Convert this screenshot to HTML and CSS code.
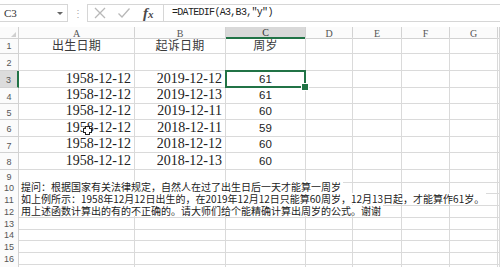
FILE: index.html
```html
<!DOCTYPE html>
<html lang="zh-CN">
<head>
    <meta charset="UTF-8">
    <meta name="viewport" content="width=device-width, initial-scale=1.0">
    <title>周岁计算</title>
    <link rel="stylesheet" href="styles.css">
</head>
<body>
    <!-- Formula bar -->
    <div class="formula-bar">
        <div class="name-box">
            <span>C3</span>
            <span class="arrow"></span>
        </div>
        <div class="grip">⋮</div>
        <div class="fx-buttons">
            <svg class="icon" width="14" height="12" viewBox="0 0 14 12">
                <path d="M2 1 L12 11 M12 1 L2 11" stroke="#b8b8b8" stroke-width="1.3" fill="none"/>
            </svg>
            <svg class="icon" width="14" height="12" viewBox="0 0 14 12">
                <path d="M1.5 6.5 L5 10 L12.5 1.5" stroke="#b8b8b8" stroke-width="1.3" fill="none"/>
            </svg>
            <span class="fx">f<span class="x">x</span></span>
        </div>
        <div class="formula">=DATEDIF(A3,B3,"y")</div>
    </div>

    <!-- Sheet -->
    <div class="sheet">
        <div class="row head">
            <div class="corner"></div>
            <div class="ch">A</div><div class="ch">B</div><div class="ch active">C</div><div class="ch">D</div>
            <div class="ch">E</div><div class="ch">F</div><div class="ch">G</div><div class="ch"></div>
        </div>

        <div class="row h17">
            <div class="rh">1</div>
            <div class="c title">出生日期</div><div class="c title">起诉日期</div><div class="c title">周岁</div>
            <div class="c"></div><div class="c"></div><div class="c"></div><div class="c"></div><div class="c"></div>
        </div>
        <div class="row h17">
            <div class="rh">2</div>
            <div class="c"></div><div class="c"></div><div class="c"></div>
            <div class="c"></div><div class="c"></div><div class="c"></div><div class="c"></div><div class="c"></div>
        </div>
        <div class="row h17">
            <div class="rh active">3</div>
            <div class="c date">1958-12-12</div><div class="c date">2019-12-12</div><div class="c num sel">61</div>
            <div class="c"></div><div class="c"></div><div class="c"></div><div class="c"></div><div class="c"></div>
        </div>
        <div class="row h16">
            <div class="rh">4</div>
            <div class="c date">1958-12-12</div><div class="c date">2019-12-13</div><div class="c num">61</div>
            <div class="c"></div><div class="c"></div><div class="c"></div><div class="c"></div><div class="c"></div>
        </div>
        <div class="row h16">
            <div class="rh">5</div>
            <div class="c date">1958-12-12</div><div class="c date">2019-12-11</div><div class="c num">60</div>
            <div class="c"></div><div class="c"></div><div class="c"></div><div class="c"></div><div class="c"></div>
        </div>
        <div class="row h17">
            <div class="rh">6</div>
            <div class="c date cursor-cell">1958-12-12<span class="cursor"></span></div><div class="c date">2018-12-11</div><div class="c num">59</div>
            <div class="c"></div><div class="c"></div><div class="c"></div><div class="c"></div><div class="c"></div>
        </div>
        <div class="row h16">
            <div class="rh">7</div>
            <div class="c date">1958-12-12</div><div class="c date">2018-12-12</div><div class="c num">60</div>
            <div class="c"></div><div class="c"></div><div class="c"></div><div class="c"></div><div class="c"></div>
        </div>
        <div class="row h17">
            <div class="rh">8</div>
            <div class="c date">1958-12-12</div><div class="c date">2018-12-13</div><div class="c num">60</div>
            <div class="c"></div><div class="c"></div><div class="c"></div><div class="c"></div><div class="c"></div>
        </div>
        <div class="row h11">
            <div class="rh">9</div>
            <div class="c"></div><div class="c"></div><div class="c"></div>
            <div class="c"></div><div class="c"></div><div class="c"></div><div class="c"></div><div class="c"></div>
        </div>

        <!-- Question text overflows across the empty cells -->
        <div class="row h12">
            <div class="rh">10</div>
            <div class="c note"><span>提问：根据国家有关法律规定，自然人在过了出生日后一天才能算一周岁</span></div><div class="c"></div><div class="c"></div>
            <div class="c"></div><div class="c"></div><div class="c"></div><div class="c"></div><div class="c"></div>
        </div>
        <div class="row h12">
            <div class="rh">11</div>
            <div class="c note"><span>如上例所示：1958年12月12日出生的，在2019年12月12日只能算60周岁，12月13日起，才能算作61岁。</span></div><div class="c"></div><div class="c"></div>
            <div class="c"></div><div class="c"></div><div class="c"></div><div class="c"></div><div class="c"></div>
        </div>
        <div class="row h12">
            <div class="rh">12</div>
            <div class="c note"><span>用上述函数计算出的有的不正确的。请大师们给个能精确计算出周岁的公式。谢谢</span></div><div class="c"></div><div class="c"></div>
            <div class="c"></div><div class="c"></div><div class="c"></div><div class="c"></div><div class="c"></div>
        </div>

        <div class="row h11">
            <div class="rh">13</div>
            <div class="c"></div><div class="c"></div><div class="c"></div>
            <div class="c"></div><div class="c"></div><div class="c"></div><div class="c"></div><div class="c"></div>
        </div>
        <div class="row h12">
            <div class="rh">14</div>
            <div class="c"></div><div class="c"></div><div class="c"></div>
            <div class="c"></div><div class="c"></div><div class="c"></div><div class="c"></div><div class="c"></div>
        </div>
        <div class="row h12">
            <div class="rh">15</div>
            <div class="c"></div><div class="c"></div><div class="c"></div>
            <div class="c"></div><div class="c"></div><div class="c"></div><div class="c"></div><div class="c"></div>
        </div>
        <div class="row h12">
            <div class="rh">16</div>
            <div class="c"></div><div class="c"></div><div class="c"></div>
            <div class="c"></div><div class="c"></div><div class="c"></div><div class="c"></div><div class="c"></div>
        </div>
        <div class="row h12">
            <div class="rh"></div>
            <div class="c"></div><div class="c"></div><div class="c"></div>
            <div class="c"></div><div class="c"></div><div class="c"></div><div class="c"></div><div class="c"></div>
        </div>
    </div>
</body>
</html>
```

FILE: styles.css
```css
* {
    margin: 0;
    padding: 0;
    box-sizing: border-box;
}
html, body {
    width: 500px;
    height: 267px;
    overflow: hidden;
}
body {
    font-family: "Noto Sans CJK SC", sans-serif;
    background: #fff;
    color: #222;
}

/* Formula bar */
.formula-bar {
    height: 27px;
    display: flex;
    align-items: flex-start;
    padding-top: 4px;
    background: #fff;
}
.name-box {
    width: 68px;
    height: 18px;
    border: 1px solid #d6d6d6;
    border-left: none;
    display: flex;
    align-items: center;
    justify-content: space-between;
    padding: 0 4px 0 4px;
    font-family: "Liberation Serif", serif;
    font-size: 11px;
    color: #333;
}
.arrow {
    width: 0;
    height: 0;
    border-left: 3px solid transparent;
    border-right: 3px solid transparent;
    border-top: 3px solid #666;
}
.grip {
    width: 19px;
    text-align: center;
    font-size: 10px;
    line-height: 18px;
    color: #aaa;
}
.fx-buttons {
    width: 76px;
    height: 18px;
    border: 1px solid #d6d6d6;
    border-right: none;
    display: flex;
    align-items: center;
    padding-left: 5px;
    gap: 10px;
}
.fx {
    font-family: "Liberation Serif", serif;
    font-style: italic;
    font-weight: bold;
    font-size: 15px;
    line-height: 14px;
    color: #4a4a4a;
    margin-left: 2px;
}
.fx .x {
    font-size: 11px;
}
.formula {
    flex: 1;
    height: 18px;
    border: 1px solid #d6d6d6;
    border-right: none;
    padding-left: 8px;
    font-family: "Liberation Mono", monospace;
    font-size: 10px;
    letter-spacing: -0.7px;
    line-height: 16px;
    color: #222;
}

/* Sheet grid */
.sheet {
    position: relative;
}
.row {
    display: grid;
    grid-template-columns: 19px 116px 91px 80px 47px 49px 48px 48px 2px;
}
.head { height: 10px; }
.h17 { height: 17px; }
.h16 { height: 16px; }
.h12 { height: 12px; }
.h11 { height: 11px; }

.corner, .ch, .rh {
    background: #fbfbfb;
    border-right: 1px solid #d2d2d2;
    border-bottom: 1px solid #d2d2d2;
    color: #555;
    font-family: "Liberation Serif", serif;
    font-size: 10px;
    display: flex;
    align-items: center;
    justify-content: center;
}
.corner {
    position: relative;
}
.corner:after {
    content: '';
    position: absolute;
    right: 2px;
    bottom: 1px;
    border-left: 5px solid transparent;
    border-bottom: 5px solid #d0d0d0;
}
.ch {
    line-height: 9px;
    padding-top: 1px;
}
.ch.active {
    background: #d9d9d9;
    border-bottom: 2px solid #217346;
    color: #333;
}
.rh {
    font-family: "Liberation Sans", sans-serif;
    font-size: 9px;
    line-height: 10px;
    padding-top: 2px;
}
.rh.active {
    background: #dcdcdc;
    border-right: 2px solid #217346;
}

.c {
    border-right: 1px solid #dadada;
    border-bottom: 1px solid #dadada;
    display: flex;
    align-items: flex-end;
    white-space: nowrap;
}
.title {
    justify-content: center;
    font-size: 12px;
    letter-spacing: 0.3px;
    color: #3a3a3a;
    line-height: 12px;
    padding-bottom: 2px;
}
.date {
    justify-content: flex-end;
    padding-right: 3px;
    font-family: "Liberation Serif", serif;
    font-size: 14px;
    line-height: 14px;
    color: #222;
    padding-bottom: 1px;
}
.num {
    justify-content: center;
    font-family: "Liberation Sans", sans-serif;
    font-size: 11.5px;
    line-height: 12px;
    color: #222;
    padding-bottom: 2px;
}

/* Selected cell C3 */
.sel {
    position: relative;
}
.sel:before {
    content: '';
    position: absolute;
    top: -1px;
    left: -1px;
    right: -1px;
    bottom: -1px;
    border: 2px solid #217346;
}
.sel:after {
    content: '';
    position: absolute;
    right: -4px;
    bottom: -4px;
    width: 6px;
    height: 6px;
    background: #217346;
    border: 1px solid #fff;
}

/* Mouse cursor over A6 */
.cursor-cell {
    position: relative;
}
.cursor {
    position: absolute;
    left: 64px;
    top: 6px;
    width: 9px;
    height: 9px;
    background:
        linear-gradient(#fff, #fff) center / 3px 7px no-repeat,
        linear-gradient(#fff, #fff) center / 7px 3px no-repeat,
        linear-gradient(#222, #222) center / 5px 9px no-repeat,
        linear-gradient(#222, #222) center / 9px 5px no-repeat;
}

/* Long text overflowing to the right */
.note {
    align-items: flex-start;
    overflow: visible;
}
.note span {
    position: relative;
    z-index: 1;
    flex-shrink: 0;
    line-height: 11px;
    padding-left: 2px;
    padding-right: 2px;
    background: #fff;
    font-size: 10px;
    color: #222;
}
```
